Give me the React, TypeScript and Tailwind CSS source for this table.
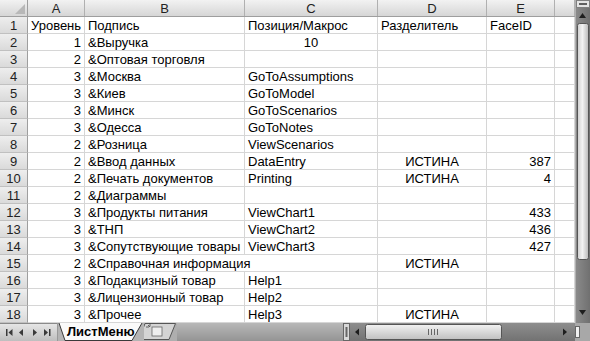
import React from 'react';

type Align = 'l' | 'c' | 'r';
type Cell = { v?: string; a?: Align; over?: boolean };

const colWidths = ['w-[57px]', 'w-[160px]', 'w-[133px]', 'w-[109px]', 'w-[68px]', 'w-[20px]'];
const colNames = ['A', 'B', 'C', 'D', 'E', ''];

const rows: Cell[][] = [
  [{ v: 'Уровень' }, { v: 'Подпись' }, { v: 'Позиция/Макрос' }, { v: 'Разделитель' }, { v: 'FaceID' }],
  [{ v: '1', a: 'r' }, { v: '&Выручка' }, { v: '10', a: 'c' }, {}, {}],
  [{ v: '2', a: 'r' }, { v: '&Оптовая торговля' }, {}, {}, {}],
  [{ v: '3', a: 'r' }, { v: '&Москва' }, { v: 'GoToAssumptions' }, {}, {}],
  [{ v: '3', a: 'r' }, { v: '&Киев' }, { v: 'GoToModel' }, {}, {}],
  [{ v: '3', a: 'r' }, { v: '&Минск' }, { v: 'GoToScenarios' }, {}, {}],
  [{ v: '3', a: 'r' }, { v: '&Одесса' }, { v: 'GoToNotes' }, {}, {}],
  [{ v: '2', a: 'r' }, { v: '&Розница' }, { v: 'ViewScenarios' }, {}, {}],
  [{ v: '2', a: 'r' }, { v: '&Ввод данных' }, { v: 'DataEntry' }, { v: 'ИСТИНА', a: 'c' }, { v: '387', a: 'r' }],
  [{ v: '2', a: 'r' }, { v: '&Печать документов' }, { v: 'Printing' }, { v: 'ИСТИНА', a: 'c' }, { v: '4', a: 'r' }],
  [{ v: '2', a: 'r' }, { v: '&Диаграммы' }, {}, {}, {}],
  [{ v: '3', a: 'r' }, { v: '&Продукты питания' }, { v: 'ViewChart1' }, {}, { v: '433', a: 'r' }],
  [{ v: '3', a: 'r' }, { v: '&ТНП' }, { v: 'ViewChart2' }, {}, { v: '436', a: 'r' }],
  [{ v: '3', a: 'r' }, { v: '&Сопутствующие товары' }, { v: 'ViewChart3' }, {}, { v: '427', a: 'r' }],
  [{ v: '2', a: 'r' }, { v: '&Справочная информация', over: true }, {}, { v: 'ИСТИНА', a: 'c' }, {}],
  [{ v: '3', a: 'r' }, { v: '&Подакцизный товар' }, { v: 'Help1' }, {}, {}],
  [{ v: '3', a: 'r' }, { v: '&Лицензионный товар' }, { v: 'Help2' }, {}, {}],
  [{ v: '3', a: 'r' }, { v: '&Прочее' }, { v: 'Help3' }, { v: 'ИСТИНА', a: 'c' }, {}],
];

const alignCls = (a?: Align) => (a === 'r' ? 'justify-end' : a === 'c' ? 'justify-center' : 'justify-start');

function Sheet() {
  return (
    <div className="w-[575px] h-[323px] overflow-hidden">
      <div className="flex h-[17px] bg-linear-to-b from-[#f2f2f2] to-[#d6d6d6] border-b border-[#9e9e9e]">
        <div className="w-[28px] border-r border-[#9e9e9e] flex items-end justify-end p-[2px]">
          <svg width="10" height="10" viewBox="0 0 10 10"><path d="M10 0 L10 10 L0 10 Z" fill="#b8b8b8" /></svg>
        </div>
        {colNames.map((c, i) => (
          <div key={i} className={`${colWidths[i]} border-r border-[#b0b0b0] flex items-center justify-center text-[#222]`}>
            {c}
          </div>
        ))}
      </div>
      {rows.map((r, ri) => (
        <div key={ri} className="flex h-[17px]">
          <div className="w-[28px] bg-linear-to-b from-[#eeeeee] to-[#dadada] border-r border-b border-r-[#9e9e9e] border-b-[#c0c0c0] flex items-center justify-center text-[#222]">
            {ri + 1}
          </div>
          {[...r, {}].map((cell, ci) => (
            <div
              key={ci}
              className={`${colWidths[ci]} border-b border-[#d6d6d6] ${cell.over ? 'border-r-0 overflow-visible relative z-10' : 'border-r overflow-hidden'} flex items-center ${alignCls(cell.a)} px-[3px] whitespace-nowrap`}
            >
              {cell.v}
            </div>
          ))}
        </div>
      ))}
    </div>
  );
}

// vertical scroll bar, drawn
function VScroll() {
  return (
    <svg width="15" height="323" viewBox="0 0 15 323">
      <defs>
        <linearGradient id="vtrack" x1="0" x2="1" y1="0" y2="0">
          <stop offset="0" stopColor="#8c8c8c" />
          <stop offset="1" stopColor="#707070" />
        </linearGradient>
        <linearGradient id="vthumb" x1="0" x2="1" y1="0" y2="0">
          <stop offset="0" stopColor="#cfcfcf" />
          <stop offset="0.45" stopColor="#f2f2f2" />
          <stop offset="1" stopColor="#b8b8b8" />
        </linearGradient>
      </defs>
      <rect x="0" y="0" width="15" height="323" fill="url(#vtrack)" />
      <line x1="0.5" y1="0" x2="0.5" y2="323" stroke="#b0b0b0" />
      <rect x="1.5" y="0.5" width="13" height="7" fill="#e4e4e4" stroke="#808080" />
      <rect x="4" y="3" width="8" height="2" fill="#606060" />
      <path d="M4 18 L7.5 13 L11 18 Z" fill="#1e1e1e" />
      <rect x="2.5" y="23.5" width="11" height="236" rx="2" fill="url(#vthumb)" stroke="#555555" />
      <path d="M4 310 L11 310 L7.5 315 Z" fill="#1e1e1e" />
    </svg>
  );
}

const NavIcons = () => (
  <svg width="58" height="18" viewBox="0 0 58 18">
    <defs>
      <linearGradient id="nav" x1="0" x2="0" y1="0" y2="1">
        <stop offset="0" stopColor="#e8e8e8" />
        <stop offset="1" stopColor="#bebebe" />
      </linearGradient>
    </defs>
    <rect width="58" height="18" fill="url(#nav)" />
    <line x1="0" y1="0.5" x2="58" y2="0.5" stroke="#8a8a8a" />
    <line x1="57.5" y1="0" x2="57.5" y2="18" stroke="#9a9a9a" />
    <rect x="6" y="6" width="1.5" height="7" fill="#3a3a3a" />
    <path d="M12.5 6 L8.5 9.5 L12.5 13 Z" fill="#3a3a3a" />
    <path d="M23 6 L19 9.5 L23 13 Z" fill="#3a3a3a" />
    <path d="M33 6 L37 9.5 L33 13 Z" fill="#3a3a3a" />
    <path d="M44 6 L48 9.5 L44 13 Z" fill="#3a3a3a" />
    <rect x="49" y="6" width="1.5" height="7" fill="#3a3a3a" />
  </svg>
);

// horizontal scroll bar, drawn
const HScroll = () => (
  <svg width="232" height="18" viewBox="0 0 232 18">
    <defs>
      <linearGradient id="htrack" x1="0" x2="0" y1="0" y2="1">
        <stop offset="0" stopColor="#8e8e8e" />
        <stop offset="1" stopColor="#727272" />
      </linearGradient>
      <linearGradient id="hthumb" x1="0" x2="0" y1="0" y2="1">
        <stop offset="0" stopColor="#f2f2f2" />
        <stop offset="1" stopColor="#c0c0c0" />
      </linearGradient>
    </defs>
    <rect width="232" height="18" fill="url(#htrack)" />
    <rect x="0.5" y="0.5" width="6" height="17" fill="#d8d8d8" stroke="#666666" />
    <rect x="2.5" y="4" width="2" height="10" fill="#666666" />
    <path d="M16 5.5 L12 9 L16 12.5 Z" fill="#1e1e1e" />
    <rect x="22.5" y="1.5" width="136" height="15" rx="2" fill="url(#hthumb)" stroke="#555555" />
    <rect x="85" y="6" width="1" height="6" fill="#666666" />
    <rect x="88" y="6" width="1" height="6" fill="#666666" />
    <rect x="91" y="6" width="1" height="6" fill="#666666" />
    <rect x="94" y="6" width="1" height="6" fill="#666666" />
    <path d="M220 5.5 L224 9 L220 12.5 Z" fill="#1e1e1e" />
  </svg>
);

const Corner = () => (
  <svg width="15" height="18" viewBox="0 0 15 18">
    <rect width="15" height="18" fill="#a8a8a8" />
    <rect x="0.5" y="3.5" width="4" height="11" fill="#f0f0f0" stroke="#666666" />
  </svg>
);

function TabBar() {
  return (
    <div className="col-span-2 flex h-[18px] overflow-hidden">
      <NavIcons />
      <div className="relative w-[86px]">
        <svg width="86" height="18" viewBox="0 0 86 18" className="absolute inset-0">
          <rect width="86" height="18" fill="#b4b4b4" />
          <path d="M1 0 L7 17.5 L74 17.5 L84 0" fill="#fafafa" stroke="#3a3a3a" strokeWidth="1" />
        </svg>
        <span className="relative block font-bold leading-[17px] pl-[9px] whitespace-nowrap">ЛистМеню</span>
      </div>
      <svg width="42" height="18" viewBox="0 0 42 18" className="-ml-[9px]">
        <path d="M9 0 L42 0 L42 18 L4 18 Z" fill="#aeaeae" />
        <path d="M4 16.5 L34 16.5 L40.5 0.5 L10 0.5 Z" fill="#d4d4d4" stroke="#555555" strokeWidth="1" />
        <rect x="17" y="4" width="10" height="9" fill="#eeeeee" stroke="#666666" strokeWidth="0.8" />
        <path d="M13 2 L15 4 M15 0.5 L15 3.5 M11 4 L14 4" stroke="#444" strokeWidth="0.8" />
      </svg>
      <div className="flex-1">
        <svg width="100%" height="18" preserveAspectRatio="none" viewBox="0 0 10 18">
          <defs>
            <linearGradient id="bar" x1="0" x2="0" y1="0" y2="1">
              <stop offset="0" stopColor="#b8b8b8" />
              <stop offset="1" stopColor="#949494" />
            </linearGradient>
          </defs>
          <rect width="10" height="18" fill="url(#bar)" />
        </svg>
      </div>
      <HScroll />
      <Corner />
    </div>
  );
}

export default function App() {
  return (
    <div className="w-[590px] h-[341px] overflow-hidden bg-white grid grid-cols-[575px_15px] grid-rows-[323px_18px] font-['Liberation_Sans',Arial,sans-serif] text-[13px] leading-none text-black">
      <Sheet />
      <VScroll />
      <TabBar />
    </div>
  );
}
